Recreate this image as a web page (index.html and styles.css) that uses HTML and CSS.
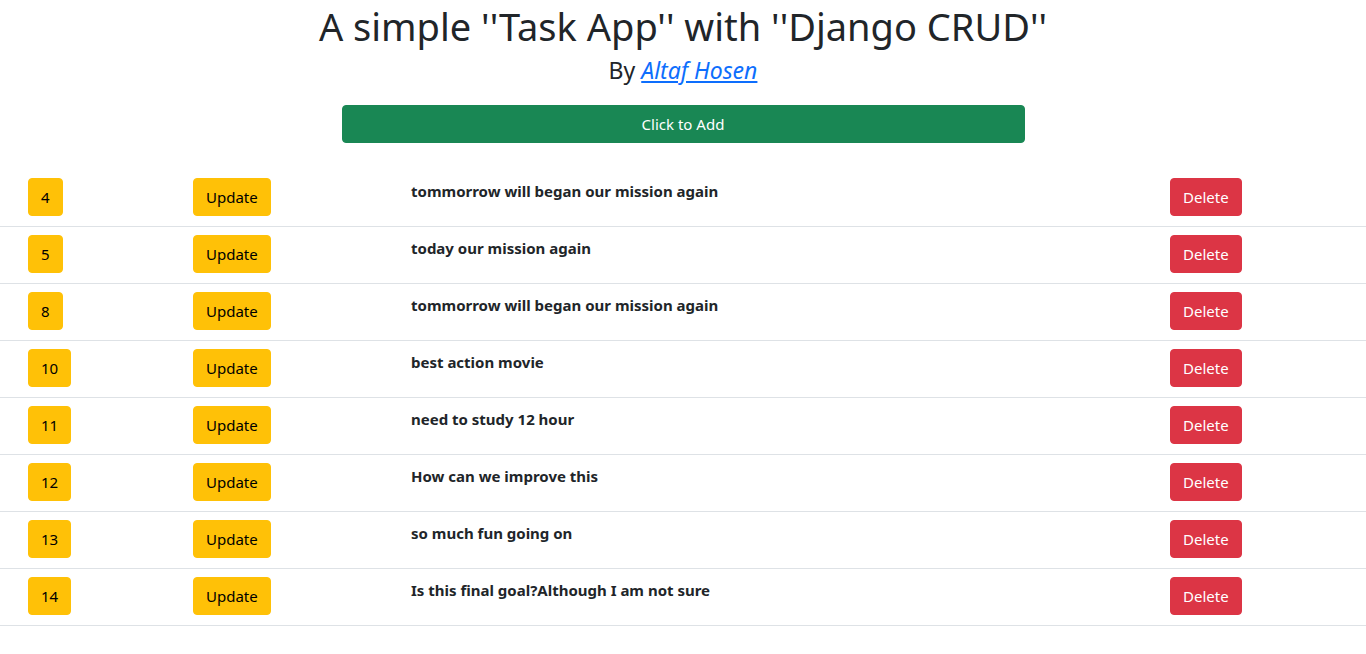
FILE: index.html
```html
<!DOCTYPE html>
<html lang="en">
<head>
<meta charset="utf-8">
<title>Task App</title>
<link rel="stylesheet" href="styles.css">
</head>
<body>
<header class="hero">
  <h1 class="title">A simple ''Task App'' with ''Django CRUD''</h1>
  <h4 class="byline">By <a href="#" class="author"><em>Altaf Hosen</em></a></h4>
  <div class="add-wrap"><button class="btn btn-add">Click to Add</button></div>
</header>
<table class="tasks">
  <colgroup>
    <col class="c-id"><col class="c-upd"><col class="c-txt"><col class="c-del">
  </colgroup>
  <tbody>
    <tr><td class="first"><button class="btn btn-yellow">4</button></td><td><button class="btn btn-yellow">Update</button></td><th>tommorrow will began our mission again</th><td><button class="btn btn-red">Delete</button></td></tr>
    <tr><td class="first"><button class="btn btn-yellow">5</button></td><td><button class="btn btn-yellow">Update</button></td><th>today our mission again</th><td><button class="btn btn-red">Delete</button></td></tr>
    <tr><td class="first"><button class="btn btn-yellow">8</button></td><td><button class="btn btn-yellow">Update</button></td><th>tommorrow will began our mission again</th><td><button class="btn btn-red">Delete</button></td></tr>
    <tr><td class="first"><button class="btn btn-yellow">10</button></td><td><button class="btn btn-yellow">Update</button></td><th>best action movie</th><td><button class="btn btn-red">Delete</button></td></tr>
    <tr><td class="first"><button class="btn btn-yellow">11</button></td><td><button class="btn btn-yellow">Update</button></td><th>need to study 12 hour</th><td><button class="btn btn-red">Delete</button></td></tr>
    <tr><td class="first"><button class="btn btn-yellow">12</button></td><td><button class="btn btn-yellow">Update</button></td><th>How can we improve this</th><td><button class="btn btn-red">Delete</button></td></tr>
    <tr><td class="first"><button class="btn btn-yellow">13</button></td><td><button class="btn btn-yellow">Update</button></td><th>so much fun going on</th><td><button class="btn btn-red">Delete</button></td></tr>
    <tr><td class="first"><button class="btn btn-yellow">14</button></td><td><button class="btn btn-yellow">Update</button></td><th>Is this final goal?Although I am not sure</th><td><button class="btn btn-red">Delete</button></td></tr>
  </tbody>
</table>
</body>
</html>
```

FILE: styles.css
```css
* { box-sizing: border-box; }
body {
  margin: 0;
  font-family: "Noto Sans", "Open Sans", sans-serif;
  font-size: 16px;
  line-height: 1.5;
  color: #212529;
  background: #fff;
}
.hero { text-align: center; }
.title {
  margin: 0;
  padding-top: 4px;
  font-size: 38px;
  font-weight: 400;
  line-height: 1.2;
}
.byline {
  margin: 7px 0 0;
  font-size: 23px;
  font-weight: 400;
  line-height: 1.2;
}
.author { color: #0d6efd; text-decoration: underline; }
.add-wrap {
  display: flex;
  justify-content: center;
  margin-top: 21px;
}
.btn {
  display: inline-block;
  vertical-align: top;
  font-family: inherit;
  font-size: 15px;
  line-height: 24px;
  padding: 6px 12px;
  border: 1px solid transparent;
  border-radius: 4px;
  cursor: pointer;
}
.btn-add {
  width: 683px;
  background: #198754;
  border-color: #198754;
  color: #fff;
}
.btn-yellow { background: #ffc107; border-color: #ffc107; color: #000; }
.btn-red { background: #dc3545; border-color: #dc3545; color: #fff; }
.tasks {
  width: 100%;
  margin-top: 27px;
  border-collapse: collapse;
  table-layout: fixed;
}
.c-id { width: 185px; }
.c-upd { width: 218px; }
.c-txt { width: 759px; }
.tasks td, .tasks th {
  padding: 8px 8px 10px;
  vertical-align: top;
  text-align: left;
  border-bottom: 1px solid #dee2e6;
  font-size: 15px;
}
.tasks th { font-weight: 700; padding-top: 10px; }
.tasks td.first { padding-left: 28px; }
```
